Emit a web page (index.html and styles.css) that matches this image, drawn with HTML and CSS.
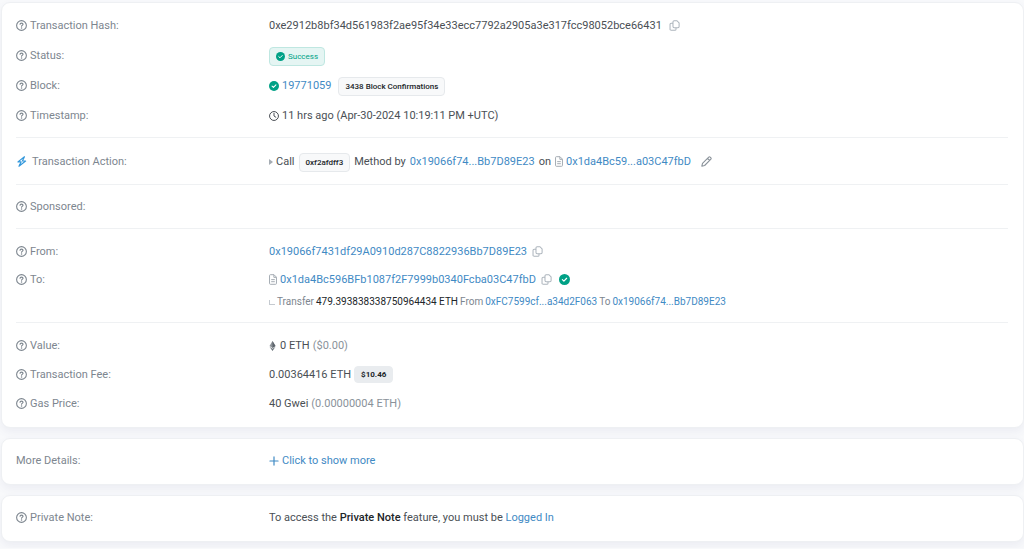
FILE: index.html
```html
<!DOCTYPE html>
<html lang="en">
<head>
    <meta charset="UTF-8">
    <meta name="viewport" content="width=device-width, initial-scale=1.0">
    <title>Transaction Details</title>
    <link rel="stylesheet" href="styles.css">
</head>
<body>
    <svg class="sprite" aria-hidden="true">
        <symbol id="help" viewBox="0 0 16 16">
            <circle cx="8" cy="8" r="7.1" fill="none" stroke="currentColor" stroke-width="1.6"/>
            <path d="M5.9 6.2c0-1.1.8-1.7 2.1-1.7s2.2.7 2.2 1.8c0 1.5-2.1 1.5-2.1 2.7" fill="none" stroke="currentColor" stroke-width="1.7" stroke-linecap="round"/>
            <circle cx="8.1" cy="11.5" r="1.1" fill="currentColor"/>
        </symbol>
        <symbol id="check" viewBox="0 0 16 16">
            <circle cx="8" cy="8" r="8" fill="currentColor"/>
            <path d="M4.9 8.2l2.2 2.1 4-4.1" fill="none" stroke="#fff" stroke-width="1.7" stroke-linecap="round" stroke-linejoin="round"/>
        </symbol>
        <symbol id="clock" viewBox="0 0 16 16">
            <circle cx="8" cy="8" r="7.1" fill="none" stroke="currentColor" stroke-width="1.6"/>
            <path d="M8 3.700V8l3 2" fill="none" stroke="currentColor" stroke-width="1.6" stroke-linecap="round"/>
        </symbol>
        <symbol id="copy" viewBox="0 0 16 16">
            <path d="M7.500 1h4L14.700 4.200v5.300a1.700 1.700 0 0 1-1.700 1.700H7.500a1.700 1.700 0 0 1-1.700-1.700V2.700A1.700 1.700 0 0 1 7.500 1zM5.800 4.700H3.200A1.700 1.700 0 0 0 1.500 6.400v6.900A1.700 1.700 0 0 0 3.200 15h5.300a1.700 1.700 0 0 0 1.700-1.700v-2" fill="none" stroke="currentColor" stroke-width="1.500"/>
        </symbol>
        <symbol id="file" viewBox="0 0 12 16">
            <path d="M2 .8h5.500L11.200 4.500v9.400a1.300 1.300 0 0 1-1.300 1.300H2A1.300 1.300 0 0 1 .8 13.900V2A1.300 1.300 0 0 1 2 .8zM7.300 1v3.800h3.800M3.300 8.200h5.400M3.300 11.300h5.400" fill="none" stroke="currentColor" stroke-width="1.500"/>
        </symbol>
        <symbol id="bolt" viewBox="0 0 16 16">
            <path d="M12.300 1.200L2.800 8.600h4.600L4.300 14.800l9.700-7.500H9.300z" fill="none" stroke="currentColor" stroke-width="1.700" stroke-linejoin="round"/>
        </symbol>
        <symbol id="pencil" viewBox="0 0 16 16">
            <path d="M1.200 14.800l1-4.100L11.300 1.600a1.400 1.400 0 0 1 2 0l1.100 1.100a1.400 1.400 0 0 1 0 2L5.300 13.800zM9.500 3.500l3 3" fill="none" stroke="currentColor" stroke-width="1.600" stroke-linejoin="round"/>
        </symbol>
        <symbol id="plus" viewBox="0 0 16 16">
            <path d="M8 1.500v13M1.500 8h13" fill="none" stroke="currentColor" stroke-width="1.900" stroke-linecap="round"/>
        </symbol>
        <symbol id="eth" viewBox="0 0 10 16">
            <path d="M5 0L9.800 8 5 11 .2 8z" fill="#8c9298"/>
            <path d="M5 0l4.800 8L5 11z" fill="#5d646c"/>
            <path d="M.2 9.200L5 12.200l4.800-3L5 16z" fill="#6c757d"/>
        </symbol>
    </svg>

    <main class="page">
        <section class="card">
            <dl class="group overview">
                <div class="row">
                    <dt><svg class="icon"><use href="#help"/></svg>Transaction Hash:</dt>
                    <dd>
                        0xe2912b8bf34d561983f2ae95f34e33ecc7792a2905a3e317fcc98052bce66431
                        <button class="icon-btn" aria-label="Copy hash"><svg class="icon"><use href="#copy"/></svg></button>
                    </dd>
                </div>
                <div class="row">
                    <dt><svg class="icon"><use href="#help"/></svg>Status:</dt>
                    <dd><span class="badge badge-success"><svg class="icon-sm"><use href="#check"/></svg>Success</span></dd>
                </div>
                <div class="row">
                    <dt><svg class="icon"><use href="#help"/></svg>Block:</dt>
                    <dd>
                        <svg class="icon-md green"><use href="#check"/></svg>
                        <a href="#">19771059</a>
                        <span class="badge confirmations">3438 Block Confirmations</span>
                    </dd>
                </div>
                <div class="row">
                    <dt><svg class="icon"><use href="#help"/></svg>Timestamp:</dt>
                    <dd><svg class="icon-md"><use href="#clock"/></svg>11 hrs ago (Apr-30-2024 10:19:11 PM +UTC)</dd>
                </div>
            </dl>
            <dl class="group action">
                <div class="row">
                    <dt><svg class="icon blue"><use href="#bolt"/></svg>Transaction Action:</dt>
                    <dd>
                        <span class="call"><span class="caret"></span>Call</span>
                        <span class="badge">0xf2afdff3</span>
                        Method by
                        <a href="#">0x19066f74...Bb7D89E23</a>
                        on
                        <span class="address"><svg class="icon-file"><use href="#file"/></svg><a href="#">0x1da4Bc59...a03C47fbD</a></span>
                        <button class="icon-btn edit" aria-label="Edit action"><svg class="icon"><use href="#pencil"/></svg></button>
                    </dd>
                </div>
            </dl>
            <dl class="group">
                <div class="row">
                    <dt><svg class="icon"><use href="#help"/></svg>Sponsored:</dt>
                    <dd></dd>
                </div>
            </dl>
            <dl class="group parties">
                <div class="row">
                    <dt><svg class="icon"><use href="#help"/></svg>From:</dt>
                    <dd>
                        <a href="#">0x19066f7431df29A0910d287C8822936Bb7D89E23</a>
                        <button class="icon-btn near" aria-label="Copy sender"><svg class="icon"><use href="#copy"/></svg></button>
                    </dd>
                </div>
                <div class="row">
                    <dt><svg class="icon"><use href="#help"/></svg>To:</dt>
                    <dd>
                        <svg class="icon-file"><use href="#file"/></svg>
                        <a href="#">0x1da4Bc596BFb1087f2F7999b0340Fcba03C47fbD</a>
                        <button class="icon-btn near" aria-label="Copy recipient"><svg class="icon"><use href="#copy"/></svg></button>
                        <svg class="icon green verified"><use href="#check"/></svg>
                    </dd>
                    <dd class="transfer">
                        <span class="elbow"></span>
                        Transfer
                        <strong>479.393838338750964434 ETH</strong>
                        From
                        <a href="#">0xFC7599cf...a34d2F063</a>
                        To
                        <a href="#">0x19066f74...Bb7D89E23</a>
                    </dd>
                </div>
            </dl>
            <dl class="group fees">
                <div class="row">
                    <dt><svg class="icon"><use href="#help"/></svg>Value:</dt>
                    <dd><svg class="icon-eth"><use href="#eth"/></svg>0 ETH <span class="muted">($0.00)</span></dd>
                </div>
                <div class="row">
                    <dt><svg class="icon"><use href="#help"/></svg>Transaction Fee:</dt>
                    <dd>0.00364416 ETH <span class="badge badge-fee">$10.46</span></dd>
                </div>
                <div class="row">
                    <dt><svg class="icon"><use href="#help"/></svg>Gas Price:</dt>
                    <dd>40 Gwei <span class="muted">(0.00000004 ETH)</span></dd>
                </div>
            </dl>
        </section>

        <section class="card">
            <dl class="group single">
                <div class="row">
                    <dt>More Details:</dt>
                    <dd><a class="more" href="#"><svg class="icon-md"><use href="#plus"/></svg>Click to show more</a></dd>
                </div>
            </dl>
        </section>

        <section class="card">
            <dl class="group single">
                <div class="row">
                    <dt><svg class="icon"><use href="#help"/></svg>Private Note:</dt>
                    <dd><p>To access the <strong>Private Note</strong> feature, you must be <a href="#">Logged In</a></p></dd>
                </div>
            </dl>
        </section>
    </main>
</body>
</html>
```

FILE: styles.css
```css
* {
    box-sizing: border-box;
}
body {
    margin: 0;
    font-family: Roboto, "Liberation Sans", sans-serif;
    font-size: 11px;
    line-height: 16px;
    color: #4a4f55;
    background-color: #f8f9fb;
}
a {
    color: #3f8ac4;
    text-decoration: none;
}
a:hover {
    color: #0b5a94;
}
p, dl, dd {
    margin: 0;
}
svg {
    flex: none;
}
strong {
    font-weight: 500;
    color: #212529;
}
.sprite {
    display: none;
}
.page {
    display: flex;
    flex-direction: column;
    gap: 10px;
    padding: 2px 0 6px 1px;
}
.card {
    padding: 0 15px 0 14px;
    background: white;
    border: 1px solid #eef0f3;
    border-radius: 9px;
    box-shadow: 0 4px 9px rgba(80, 90, 140, 0.07);
}
.group {
    padding: 7px 0 6px;
}
.group + .group {
    border-top: 1px solid #eff1f3;
}
.overview {
    padding: 8px 0 6px;
}
.action {
    padding: 9px 0 7px;
}
.parties {
    padding: 9px 0 12px;
}
.fees {
    padding: 8px 0 9px;
}
.single {
    padding: 7px 0 8px;
}
.row {
    display: grid;
    grid-template-columns: 253px 1fr;
    align-items: center;
    min-height: 30px;
}
.parties .row {
    grid-template-rows: 28px;
    min-height: 28px;
}
.fees .row {
    min-height: 29px;
}
dt {
    display: flex;
    align-items: center;
    gap: 3px;
    color: #7d868f;
}
.action dt {
    gap: 5px;
}
dd {
    display: flex;
    align-items: center;
    gap: 3px;
}
.action dd {
    gap: 4px;
}
.icon {
    width: 11px;
    height: 11px;
    margin-bottom: 1px;
}
.icon-md {
    width: 10px;
    height: 10px;
}
.icon-sm {
    width: 9px;
    height: 9px;
}
.icon-file {
    width: 8px;
    height: 11px;
    margin-bottom: 1px;
    color: #a5acb3;
}
.icon-eth {
    width: 7px;
    height: 10px;
    margin-right: 1px;
}
.green {
    color: #00a186;
}
.blue {
    color: #3498db;
}
.muted {
    color: #8a929a;
}
.icon-btn {
    display: flex;
    margin-left: 4px;
    padding: 0;
    border: none;
    background: none;
    color: #adb5bd;
    cursor: pointer;
}
.near {
    margin-left: 2px;
}
.edit {
    margin-left: 6px;
    color: #8a929a;
}
.verified {
    margin-left: 4px;
}
.badge {
    display: flex;
    align-items: center;
    gap: 3px;
    padding: 0 6px;
    border: 1px solid #e6e9ec;
    border-radius: 4px;
    background-color: #f8f9fa;
    color: #212529;
    font-size: 8px;
    font-weight: 500;
    line-height: 17px;
}
.confirmations {
    margin-left: 4px;
}
.badge-success {
    border-color: #bfe7e1;
    background-color: #e5f5f3;
    color: #00a186;
    font-weight: 400;
}
.badge-fee {
    border-color: #e9ecef;
    background-color: #e9ecef;
    font-weight: 700;
    line-height: 15px;
}
.caret {
    border: 3px solid transparent;
    border-left: 4px solid #a5acb3;
    border-right: none;
}
.call, .address, .more {
    display: flex;
    align-items: center;
    gap: 3px;
}
.transfer {
    grid-column: 2;
    gap: 2px;
    font-size: 10px;
    color: #7d868f;
}
.transfer strong {
    font-weight: 400;
}
.elbow {
    width: 6px;
    height: 5px;
    border-left: 1px solid #c5cad0;
    border-bottom: 1px solid #c5cad0;
}
```
